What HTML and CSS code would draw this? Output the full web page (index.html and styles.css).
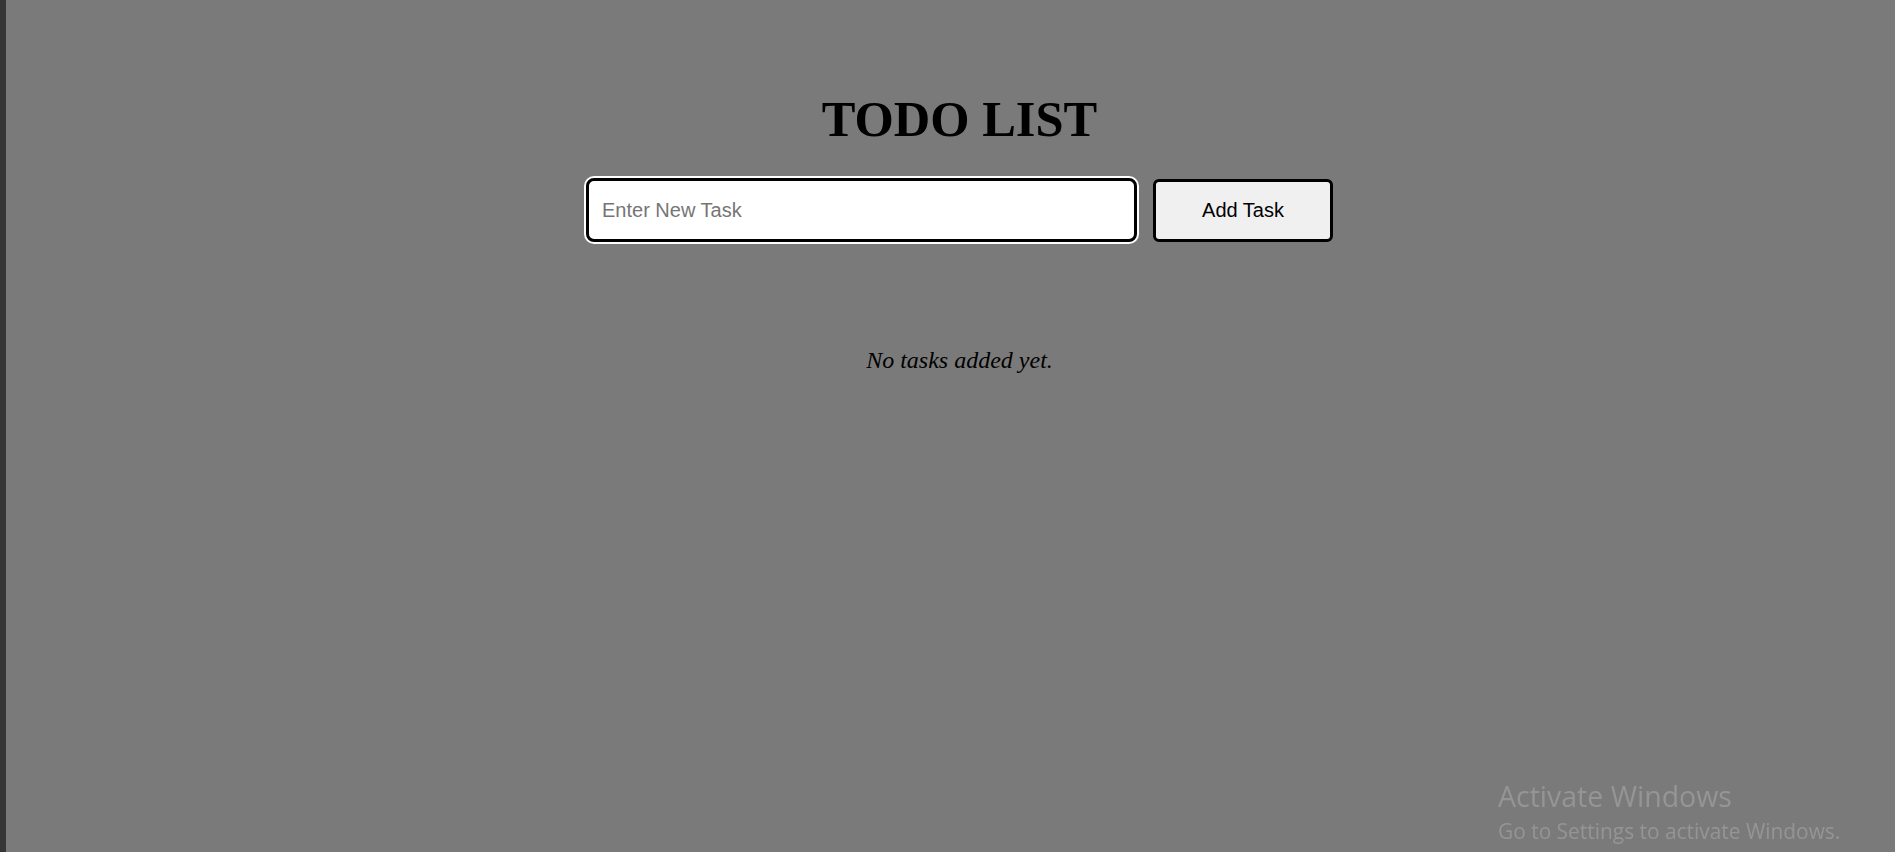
FILE: index.html
```html
<!DOCTYPE html>
<html lang="en">
<head>
<meta charset="utf-8">
<title>Todo List</title>
<link rel="stylesheet" href="styles.css">
</head>
<body>
  <main class="app">
    <h1 class="title">TODO LIST</h1>
    <div class="task-form">
      <input class="task-input" type="text" placeholder="Enter New Task">
      <button class="add-btn" type="button">Add Task</button>
    </div>
    <p class="empty">No tasks added yet.</p>
  </main>
  <div class="watermark">
    <div class="wm-title">Activate Windows</div>
    <div class="wm-sub">Go to Settings to activate Windows.</div>
  </div>
</body>
</html>
```

FILE: styles.css
```css
html, body {
  margin: 0;
  padding: 0;
  height: 100%;
}

body {
  background: #7a7a7a;
  border-left: 6px solid #363636;
  box-sizing: border-box;
  overflow: hidden;
  font-family: "Liberation Serif", "Times New Roman", serif;
}

.app {
  display: flex;
  flex-direction: column;
  align-items: center;
  padding: 89px 0 0 18px;
}

.title {
  margin: 0 0 29px;
  font-size: 50.5px;
  line-height: 60px;
  font-weight: bold;
  color: #000;
}

.task-form {
  display: flex;
  align-items: center;
  gap: 16px;
}

.task-input {
  box-sizing: border-box;
  width: 551px;
  height: 64px;
  border: 3px solid #000;
  border-radius: 8px;
  box-shadow: 0 0 0 2px #fff;
  outline: none;
  background: #fff;
  padding: 0 13px;
  font-family: "Liberation Sans", Arial, sans-serif;
  font-size: 20px;
  color: #000;
}

.task-input::placeholder {
  color: #757575;
}

.add-btn {
  box-sizing: border-box;
  width: 180px;
  height: 63px;
  border: 3px solid #000;
  border-radius: 6px;
  background: #f0f0f0;
  font-family: "Liberation Sans", Arial, sans-serif;
  font-size: 20px;
  color: #000;
  padding: 0;
}

.empty {
  margin: 103px 0 0;
  font-style: italic;
  font-size: 24px;
  line-height: 30px;
  color: #000;
}

.watermark {
  position: fixed;
  left: 1498px;
  top: 778px;
  font-family: "Open Sans", "Noto Sans", sans-serif;
  color: #959595;
  white-space: nowrap;
}

.wm-title {
  font-size: 28.5px;
  line-height: 36px;
}

.wm-sub {
  font-size: 20.9px;
  line-height: 35px;
}
```
